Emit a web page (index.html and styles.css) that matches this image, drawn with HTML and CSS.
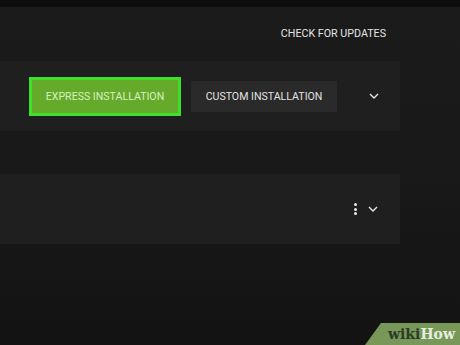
FILE: index.html
```html
<!DOCTYPE html>
<html>
<head>
<meta charset="utf-8">
<link rel="stylesheet" href="styles.css">
</head>
<body>
<div class="topstrip"></div>
<div class="content">
  <div class="updates-row"><span class="updates">CHECK FOR UPDATES</span></div>
  <div class="panel panel-install">
    <button class="btn btn-express">EXPRESS INSTALLATION</button>
    <button class="btn btn-custom">CUSTOM INSTALLATION</button>
    <span class="chev"><svg width="10" height="6" viewBox="0 0 10 6"><path d="M1 1 L5 5 L9 1" fill="none" stroke="#e6e6e6" stroke-width="1.4"/></svg></span>
  </div>
  <div class="panel panel-second">
    <span class="kebab"><i></i><i></i><i></i></span>
    <span class="chev"><svg width="10" height="6" viewBox="0 0 10 6"><path d="M1 1 L5 5 L9 1" fill="none" stroke="#e6e6e6" stroke-width="1.4"/></svg></span>
  </div>
</div>
<div class="wikihow"><span class="wiki">wiki</span><span class="how">How</span></div>
</body>
</html>
```
FILE: styles.css
```css
html, body {
  margin: 0;
  padding: 0;
}
body {
  width: 460px;
  height: 345px;
  overflow: hidden;
  position: relative;
  background: linear-gradient(180deg, #1b1b1b 0%, #191919 45%, #131313 100%);
  font-family: Roboto, "Liberation Sans", sans-serif;
}
.topstrip {
  height: 7px;
  background: #0d0d0d;
}
.content {
  width: 400px;
}
.updates-row {
  display: flex;
  justify-content: flex-end;
  padding: 20px 14px 0 0;
  height: 34px;
}
.updates {
  color: #e4e4e4;
  font-size: 10.7px;
  line-height: 14px;
}
.panel {
  height: 70px;
  background: #1f1f1f;
  display: flex;
  align-items: center;
}
.panel-install {
  padding-left: 29px;
}
.panel-second {
  margin-top: 43px;
  justify-content: flex-end;
  padding-right: 22px;
  gap: 11px;
}
.btn {
  font-family: Roboto, "Liberation Sans", sans-serif;
  font-size: 10.6px;
  border: none;
  padding: 0;
  margin: 0;
  cursor: pointer;
}
.btn-express {
  width: 152px;
  height: 39px;
  background: #66aa2c;
  border: 3px solid #3fe02a;
  color: #d6f0bf;
}
.btn-custom {
  width: 146px;
  height: 31px;
  margin-left: 10px;
  background: #2a2a2a;
  color: #e2e2e2;
}
.panel-install .chev {
  margin-left: 32px;
}
.chev {
  display: flex;
  width: 10px;
  height: 6px;
}
.chev svg {
  display: block;
}
.kebab {
  display: flex;
  flex-direction: column;
  gap: 1.5px;
  align-items: center;
}
.kebab i {
  display: block;
  width: 3px;
  height: 3px;
  border-radius: 50%;
  background: #e8e8e8;
}
.wikihow {
  position: absolute;
  right: 0;
  bottom: 0;
  width: 95px;
  height: 22px;
  background: #78985a;
  clip-path: polygon(16px 0, 100% 0, 100% 100%, 0 100%);
  font-family: "DejaVu Serif", "Liberation Serif", serif;
  font-weight: bold;
  font-size: 14px;
  line-height: 22px;
  padding-left: 23px;
  box-sizing: border-box;
  white-space: nowrap;
}
.wiki {
  color: #2e3a26;
}
.how {
  color: #e6ecdf;
}
```
